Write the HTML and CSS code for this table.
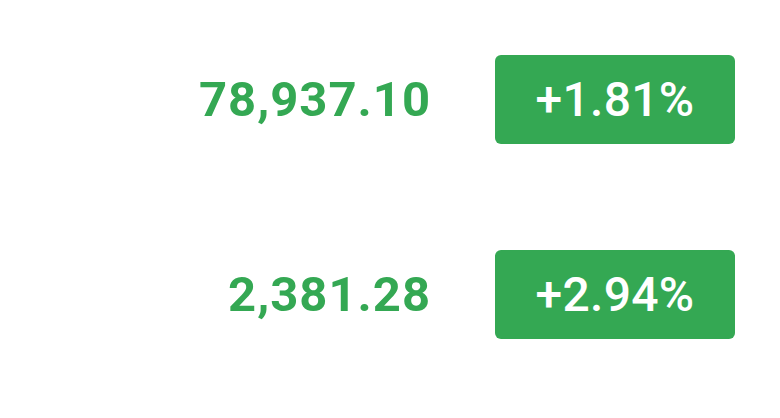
FILE: index.html
```html
<!DOCTYPE html>
<html>
<head>
<meta charset="utf-8">
<link rel="stylesheet" href="styles.css">
</head>
<body>
<div class="list">
  <div class="row">
    <div class="value">78,937.10</div>
    <div class="badge">+1.81%</div>
  </div>
  <div class="row">
    <div class="value">2,381.28</div>
    <div class="badge">+2.94%</div>
  </div>
</div>
</body>
</html>
```
FILE: styles.css
```css
html, body {
  margin: 0;
  padding: 0;
  background: #ffffff;
  width: 780px;
  height: 418px;
  overflow: hidden;
}
.list {
  display: flex;
  flex-direction: column;
  gap: 106px;
  padding-top: 55px;
}
.row {
  display: flex;
  align-items: center;
  height: 89px;
}
.value {
  width: 431px;
  text-align: right;
  font-family: Roboto, "Liberation Sans", sans-serif;
  font-weight: 700;
  font-size: 49px;
  color: #34a853;
  letter-spacing: 1px;
}
.badge {
  margin-left: 64px;
  width: 240px;
  height: 89px;
  border-radius: 6px;
  background: #34a853;
  color: #ffffff;
  display: flex;
  align-items: center;
  justify-content: center;
  font-family: Roboto, "Liberation Sans", sans-serif;
  font-weight: 500;
  font-size: 48px;
  letter-spacing: 0.3px;
}
```
